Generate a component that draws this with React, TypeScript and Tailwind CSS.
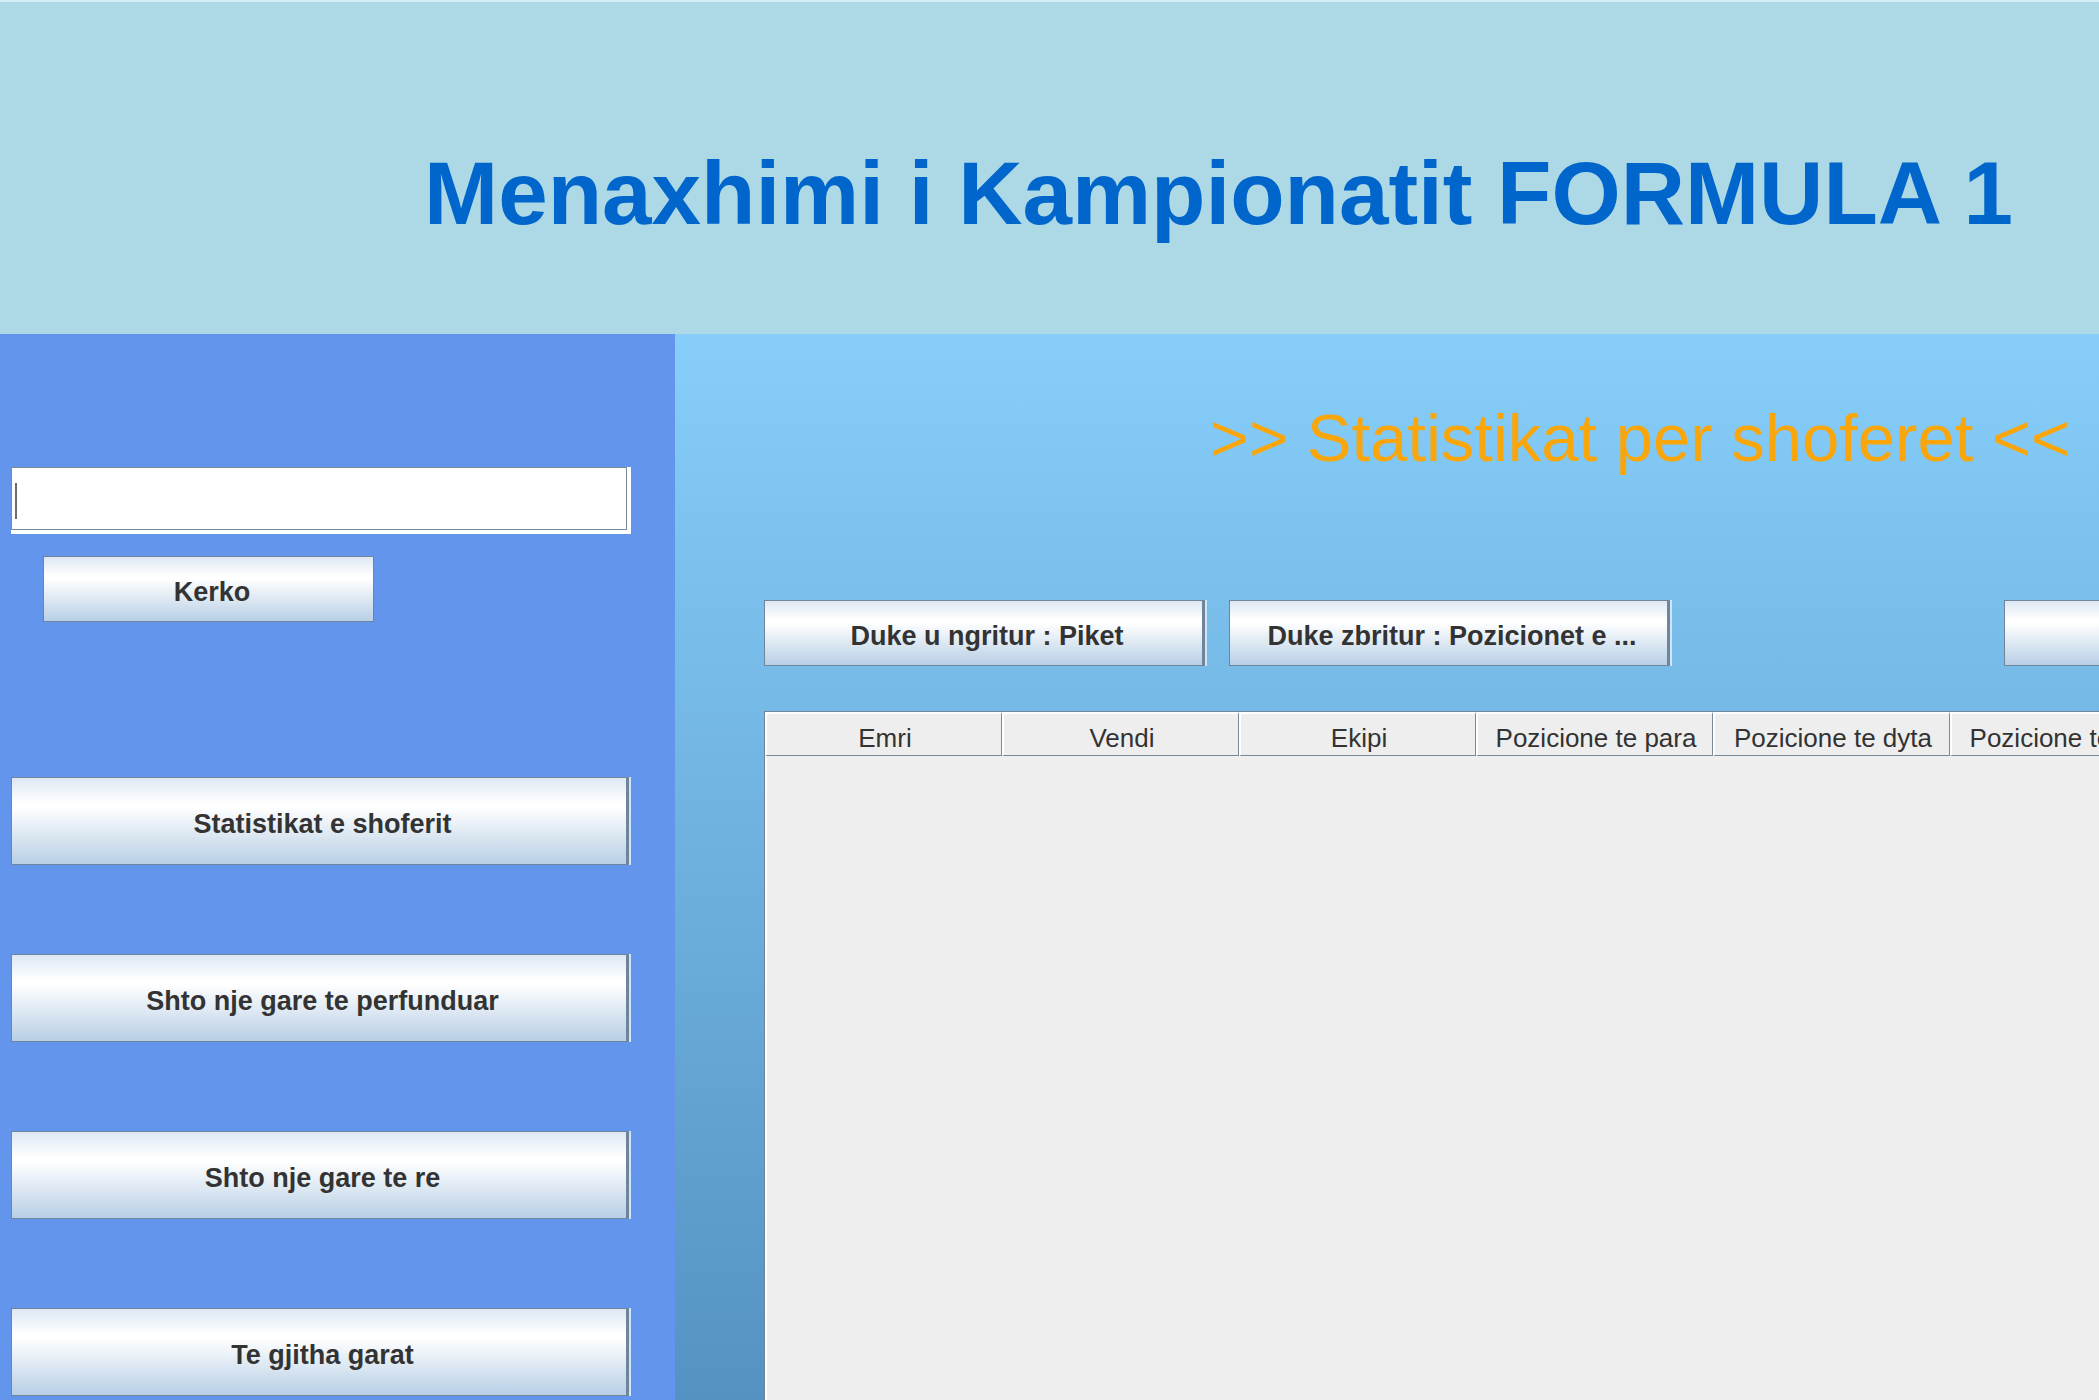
import React from "react";

const menu = [
  "Statistikat e shoferit",
  "Shto nje gare te perfunduar",
  "Shto nje gare te re",
  "Te gjitha garat",
];

const columns = [
  "Emri",
  "Vendi",
  "Ekipi",
  "Pozicione te para",
  "Pozicione te dyta",
  "Pozicione te treta",
];

const metal =
  "shrink-0 overflow-hidden whitespace-nowrap border border-[#6f859c] bg-linear-[to_bottom,#dde8f3_0%,#ffffff_30%,#ffffff_34%,#b8cfe5_100%] pt-[5px] pl-[7px] text-[27px] leading-8 font-bold text-[#333333]";
const ridge = "border-r-3 shadow-[2px_0_0_#cfe4f5]";

function MetalButton({
  label,
  className,
  children,
}: {
  label?: string;
  className: string;
  children?: React.ReactNode;
}) {
  return (
    <button type="button" aria-label={label} className={`${metal} ${className}`}>
      {children}
    </button>
  );
}

export default function App() {
  return (
    <div className="flex min-h-screen flex-col overflow-hidden bg-[#add8e6] font-['Liberation_Sans',Arial,sans-serif]">
      <header className="border-t-2 border-[#d6edf8] pt-[141px] pb-[91px] pl-[338px]">
        <h1 className="text-center text-[89px] leading-[100px] font-bold whitespace-nowrap text-[#0066cc]">
          Menaxhimi i Kampionatit FORMULA 1
        </h1>
      </header>

      <div className="flex flex-1">
        <aside className="flex w-[675px] shrink-0 flex-col bg-[#6495ed] pt-[133px] pr-[44px] pl-[11px]">
          <form className="flex flex-col items-start" onSubmit={(e) => e.preventDefault()}>
            <div className="relative w-full border-r-4 border-b-4 border-white">
              <input
                type="text"
                aria-label="Kerko"
                className="block h-[63px] w-full border border-[#7a8a99] bg-white px-1 text-[27px] outline-none"
              />
              <span className="absolute top-4 left-1 h-9 w-0.5 bg-[#6b6f73]" />
            </div>
            <MetalButton className="mt-[22px] ml-8 h-[66px] w-[331px]">Kerko</MetalButton>
          </form>

          <nav className="mt-[155px] flex flex-col gap-[89px]">
            {menu.map((item) => (
              <MetalButton key={item} className={`${ridge} h-[88px] w-[618px]`}>
                {item}
              </MetalButton>
            ))}
          </nav>
        </aside>

        <main className="flex min-w-0 flex-1 flex-col overflow-hidden bg-linear-[to_bottom,#87cefa_0%,#4682b4_127%] pt-[66px] pl-[89px]">
          <h2 className="pl-[417px] text-center text-[67px] leading-[76px] whitespace-nowrap text-[#f9a60c]">
            &gt;&gt; Statistikat per shoferet &lt;&lt;
          </h2>

          <div className="mt-[124px] flex gap-6">
            <MetalButton className={`${ridge} h-[66px] w-[441px]`}>
              Duke u ngritur : Piket
            </MetalButton>
            <MetalButton className={`${ridge} h-[66px] w-[441px]`}>
              Duke zbritur : Pozicionet e ...
            </MetalButton>
            <MetalButton label="Gara" className={`${ridge} ml-[310px] h-[66px] w-[441px]`} />
          </div>

          <div className="mt-[45px] flex-1 border-t border-l border-[#6f859c] bg-[#eeeeee] shadow-[inset_2px_0_0_#ffffff]">
            <table className="w-[1422px] table-fixed border-separate border-spacing-0">
              <thead>
                <tr>
                  {columns.map((column) => (
                    <th
                      key={column}
                      scope="col"
                      className="h-[44px] border-t-2 border-r-1 border-b-1 border-l-2 border-t-white border-r-[#7a8a99] border-b-[#7a8a99] border-l-white p-0 pt-1.5 pl-0.5 text-center text-[26px] leading-8 font-normal whitespace-nowrap text-[#333333]"
                    >
                      {column}
                    </th>
                  ))}
                </tr>
              </thead>
            </table>
          </div>
        </main>
      </div>
    </div>
  );
}
